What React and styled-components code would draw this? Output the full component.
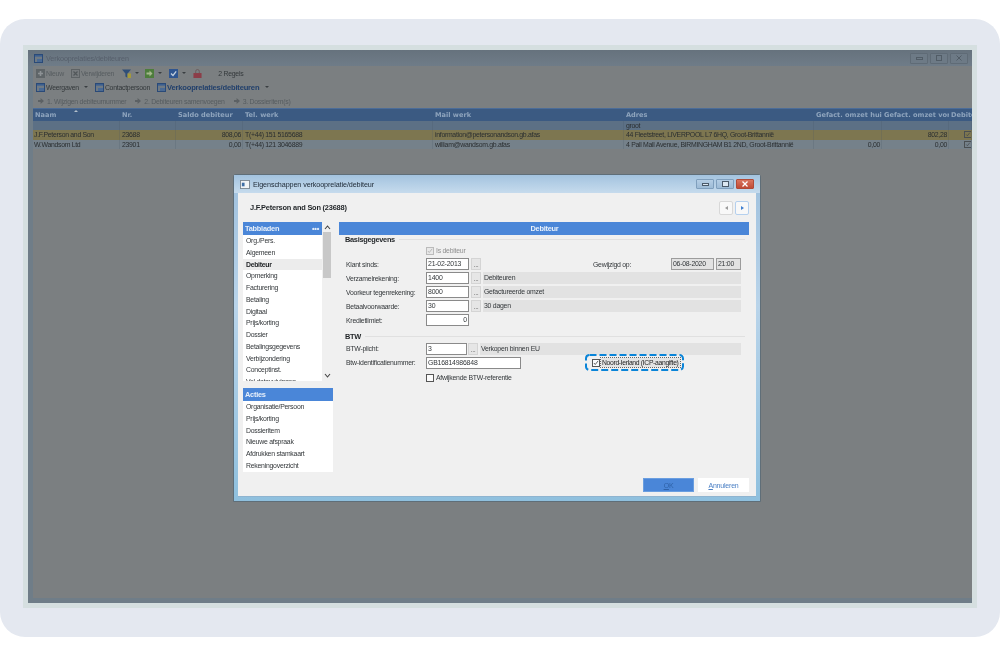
import React from 'react';
import styled, { createGlobalStyle } from 'styled-components';

const GlobalStyle = createGlobalStyle`
  html, body { margin: 0; padding: 0; background: #fff; }
  body { font-family: "Liberation Sans", Arial, sans-serif; }
`;

const Card = styled.div`
  position: relative;
  box-sizing: border-box;
  width: 1000px;
  height: 618px;
  margin-top: 19px;
  padding: 26px 23px 29px;
  background: #e4e8f0;
  border-radius: 25px;
`;

const Frame = styled.div`
  box-sizing: border-box;
  height: 563px;
  padding: 5px;
  background: #d5dfe0;
`;

const AppWindow = styled.div`
  display: flex;
  flex-direction: column;
  height: 100%;
  background: #6f7d88;
  overflow: hidden;
  filter: blur(0.35px);
`;

const AppTitle = styled.div`
  display: flex;
  align-items: center;
  height: 16px;
  flex: none;
  padding: 0 4px 0 6px;
  gap: 3px;
  background: linear-gradient(#66727d, #6f7c88);
  font-size: 7.2px;
  letter-spacing: -0.1px;
  color: #565f6b;
`;

const WinButtons = styled.div`
  display: flex;
  gap: 2px;
  margin-left: auto;
`;

const WinButton = styled.div`
  display: flex;
  align-items: center;
  justify-content: center;
  width: 18px;
  height: 11px;
  border: 1px solid #5f6b76;
  box-sizing: border-box;
  border-radius: 1px;
  color: #515c66;
  background: #6d7a86;
`;

const AppBody = styled.div`
  flex: 1;
  margin: 0 0 5px 5px;
  background: #7b7f81;
  min-height: 0;
`;

const ToolRow = styled.div`
  display: flex;
  align-items: center;
  height: 14px;
  padding-left: ${p => p.$pad ?? 3}px;
  font-size: 6.9px;
  letter-spacing: -0.25px;
  color: #33383b;
`;

const ToolItem = styled.span`
  display: inline-flex;
  align-items: center;
  gap: ${p => p.$iconGap ?? 1}px;
  margin-right: ${p => p.$gap ?? 0}px;
  color: ${p => p.$muted ? '#565c60' : p.$accent ? '#22406c' : '#33383b'};
  font-weight: ${p => p.$accent ? 700 : 400};
  font-size: ${p => p.$accent ? 7.6 : 6.9}px;
  letter-spacing: ${p => p.$accent ? -0.2 : -0.25}px;
  white-space: nowrap;
`;

const Caret = styled.i`
  display: inline-block;
  margin-left: ${p => p.$left ?? 3}px;
  border-left: 2px solid transparent;
  border-right: 2px solid transparent;
  border-top: 2px solid #3a3f42;
`;

const COLS = '87px 56px 67px 190px 191px 190px 68px 67px 23px';

const TableHead = styled.div`
  display: grid;
  grid-template-columns: ${COLS};
  height: 13px;
  background: #3b5a82;
  border-top: 1px solid #4b6c98;
  box-sizing: border-box;
  overflow: hidden;
`;

const HeadCell = styled.div`
  position: relative;
  padding: 0 0 0 2px;
  font-family: "DejaVu Sans", sans-serif;
  font-weight: 700;
  font-size: 6.6px;
  line-height: 12px;
  color: #8ea4bd;
  white-space: nowrap;
  overflow: hidden;
  ${p => p.$sorted && `
    &::after {
      content: '';
      position: absolute;
      left: 41px;
      top: 1px;
      border-left: 2px solid transparent;
      border-right: 2px solid transparent;
      border-bottom: 2px solid #b4c0cc;
    }
  `}
`;

const TableRow = styled.div`
  display: grid;
  grid-template-columns: ${COLS};
  height: ${p => p.$h}px;
  background: ${p => p.$bg};
  overflow: hidden;
`;

const Cell = styled.div`
  box-sizing: border-box;
  padding: 0 1px 0 2px;
  border-right: 1px solid rgba(70, 85, 100, 0.2);
  font-size: 6.9px;
  letter-spacing: -0.3px;
  line-height: ${p => p.$lh}px;
  color: #2a2e30;
  text-align: ${p => p.$right ? 'right' : 'left'};
  white-space: nowrap;
  overflow: hidden;
  &:first-child { padding-left: 1px; }
`;

const GridCheck = styled.span`
  float: right;
  margin: 1px -2px 0 0;
  width: 8px;
  height: 7px;
  box-sizing: border-box;
  border: 1px solid #4a4f52;
  color: #3a3f42;
  display: flex;
`;

const Dialog = styled.div`
  position: absolute;
  left: 233px;
  top: 155px;
  width: 528px;
  height: 328px;
  box-sizing: border-box;
  padding: 0 4px 4px;
  background: linear-gradient(#9fc0dd, #b9d4ea 40%, #8fc0de);
  border: 1px solid #5f6e78;
  border-radius: 3px 3px 0 0;
  display: flex;
  flex-direction: column;
  filter: blur(0.35px);
`;

const DialogTitle = styled.div`
  display: flex;
  align-items: center;
  height: 18px;
  flex: none;
  gap: 3px;
  font-size: 7.2px;
  letter-spacing: -0.1px;
  color: #1c2733;
  background: linear-gradient(#a3c3df, #c6dbed);
  margin: 0 -4px;
  padding: 0 6px 0 6px;
`;

const DialogWinButtons = styled.div`
  display: flex;
  gap: 2px;
  margin-left: auto;
`;

const DialogWinButton = styled.div`
  display: flex;
  align-items: center;
  justify-content: center;
  width: 18px;
  height: 10px;
  box-sizing: border-box;
  border: 1px solid ${p => p.$close ? '#b04a38' : '#7f9fbd'};
  background: ${p => p.$close ? 'linear-gradient(#d9745f, #c04b36)' : 'linear-gradient(#b5cee5, #9dbbd6)'};
  border-radius: 1px;
  color: ${p => p.$close ? '#fff' : '#4a5a6a'};
`;

const DialogBody = styled.div`
  position: relative;
  flex: 1;
  background: #f0f0f0;
  border-bottom: 1px solid #8fb4d0;
  min-height: 0;
  padding: 0 7px 0 5px;
`;

const DialogHead = styled.div`
  display: flex;
  align-items: center;
  justify-content: space-between;
  height: 29px;
  padding: 0 0 0 7px;
  font-size: 7.4px;
  font-weight: 700;
  color: #1f2326;
  letter-spacing: -0.2px;
`;

const NavGroup = styled.div`
  display: flex;
  gap: 2px;
`;

const NavButton = styled.div`
  display: flex;
  align-items: center;
  justify-content: center;
  width: 14px;
  height: 14px;
  box-sizing: border-box;
  background: #f8f8f8;
  border: 1px solid ${p => p.$active ? '#b5d0ee' : '#d8d8d8'};
  border-radius: 2px;
  &::after {
    content: '';
    border-top: 2.5px solid transparent;
    border-bottom: 2.5px solid transparent;
    border-left: ${p => p.$dir === 'next' ? '3px solid #3f7fd0' : 'none'};
    border-right: ${p => p.$dir === 'prev' ? '3px solid #9a9a9a' : 'none'};
  }
`;

const Columns = styled.div`
  display: flex;
  align-items: flex-start;
`;

const Side = styled.div`
  flex: none;
  width: 90px;
  margin-right: 6px;
`;

const TabsWrap = styled.div`
  display: flex;
  height: 159px;
  margin-bottom: 7px;
`;

const TabsList = styled.div`
  width: 79px;
  flex: none;
  overflow: hidden;
`;

const BlueHead = styled.div`
  display: flex;
  align-items: center;
  justify-content: space-between;
  height: 13px;
  padding: 0 3px 0 2px;
  background: #4a86d8;
  color: #e6effa;
  font-size: 7.4px;
  letter-spacing: -0.25px;
  font-weight: 700;
  box-sizing: border-box;
`;

const WhiteList = styled.div`
  background: #fff;
  overflow: hidden;
  padding: 0;
  height: ${p => p.$h}px;
`;

const NavItem = styled.div`
  height: 11.75px;
  line-height: 11.75px;
  padding-left: 3px;
  font-size: 6.9px;
  letter-spacing: ${p => p.$active ? -0.3 : -0.25}px;
  color: ${p => p.$active ? '#1d2023' : '#33373a'};
  font-weight: ${p => p.$active ? 700 : 400};
  background: ${p => p.$active ? '#ececec' : 'transparent'};
  white-space: nowrap;
`;

const ScrollTrack = styled.div`
  width: 11px;
  margin-left: 1px;
  display: flex;
  flex-direction: column;
  align-items: center;
  justify-content: space-between;
  position: relative;
`;

const ScrollThumb = styled.div`
  position: absolute;
  top: 10px;
  left: 0;
  width: 8px;
  height: 46px;
  background: #c8c8c8;
`;

const Chevron = styled.svg`
  width: 7px;
  height: 5px;
  margin: 3px 0;
  position: relative;
  left: -1px;
`;

const Main = styled.div`
  flex: 1;
  min-width: 0;
  padding-right: 0;
`;

const MainHead = styled(BlueHead)`
  justify-content: center;
  padding: 0 0 0 1px;
`;

const Section = styled.div`
  display: flex;
  align-items: center;
  gap: 4px;
  height: 9px;
  margin: ${p => p.$top ?? 0}px 4px 0 6px;
  font-size: 7.4px;
  letter-spacing: -0.3px;
  font-weight: 700;
  color: #1f2326;
  &::after {
    content: '';
    flex: 1;
    height: 1px;
    background: #e0e0e0;
  }
`;

const FormRow = styled.div`
  display: flex;
  align-items: center;
  height: ${p => p.$h ?? 14.1}px;
  margin-top: ${p => p.$top ?? 0}px;
  padding-left: 7px;
  margin-right: 8px;
  font-size: 6.9px;
  letter-spacing: -0.25px;
  color: #33373a;
`;

const Label = styled.span`
  width: 80px;
  flex: none;
  white-space: nowrap;
`;

const Hint = styled.span`
  color: #8f8f8f;
  white-space: nowrap;
`;

const ModifiedLabel = styled.span`
  margin-left: 112px;
  white-space: nowrap;
`;

const Input = styled.div`
  width: ${p => p.$w}px;
  height: 12px;
  box-sizing: border-box;
  flex: none;
  border: 1px solid #8a8a8a;
  background: #fff;
  padding: 0 1px;
  font-size: 6.9px;
  letter-spacing: -0.2px;
  line-height: 10px;
  color: #33373a;
  text-align: ${p => p.$right ? 'right' : 'left'};
  overflow: hidden;
`;

const Dots = styled.div`
  width: 10px;
  height: 12px;
  margin-left: ${p => p.$left ?? 2}px;
  box-sizing: border-box;
  flex: none;
  border: 1px solid #d4d4d4;
  background: #e6e6e6;
  color: #666;
  font-size: 7px;
  line-height: 11px;
  text-align: center;
`;

const Band = styled.div`
  flex: 1;
  height: 12px;
  margin-left: 2px;
  background: #e2e2e2;
  padding-left: 1px;
  line-height: 11px;
  white-space: nowrap;
`;

const Check = styled.span`
  display: inline-flex;
  width: 8px;
  height: 8px;
  box-sizing: border-box;
  flex: none;
  border: 1px solid ${p => p.$muted ? '#bbb' : '#555'};
  background: ${p => p.$muted ? '#e8e8e8' : '#fbfbfb'};
  color: ${p => p.$muted ? '#aaa' : '#333'};
  margin-right: 2px;
`;

const Stamp = styled.div`
  width: ${p => p.$w}px;
  height: 12px;
  flex: none;
  box-sizing: border-box;
  margin-left: ${p => p.$auto ? 'auto' : '2px'};
  border: 1px solid #9c9c9c;
  background: #e2e2e2;
  padding-left: 1px;
  line-height: 10px;
`;

const Callout = styled.div`
  position: absolute;
  left: 347px;
  top: 161px;
  display: flex;
  align-items: center;
  width: 99px;
  height: 17px;
  box-sizing: border-box;
  padding-left: 7px;
  font-size: 6.8px;
  letter-spacing: -0.33px;
  color: #222;
`;

const CalloutDash = styled.svg`
  position: absolute;
  inset: 0;
  width: 99px;
  height: 17px;
  overflow: visible;
`;

const CalloutText = styled.span`
  margin-left: -1px;
  outline: 1px dotted #666;
  padding: 0 1px;
  line-height: 9px;
  white-space: nowrap;
  background: #e4e4e4;
`;

const Footer = styled.div`
  position: absolute;
  right: 7px;
  bottom: 4px;
  display: flex;
  gap: 4px;
`;

const FootButton = styled.div`
  width: 51px;
  height: 14px;
  box-sizing: border-box;
  background: ${p => p.$primary ? '#4a86d8' : '#fff'};
  color: ${p => p.$primary ? '#2f62a8' : '#4a7fc4'};
  border: 1px solid ${p => p.$primary ? '#6a9ee0' : '#fff'};
  font-size: 7px;
  letter-spacing: -0.2px;
  line-height: 13px;
  text-align: center;
  u { text-decoration: underline; }
`;

const Ico = styled.svg`
  width: ${p => p.$s || 9}px;
  height: ${p => p.$s || 9}px;
  flex: none;
  display: block;
`;

const BoxIcon = ({ type }) => {
  if (type === 'plus') return (
    <Ico viewBox="0 0 9 9"><rect width="9" height="9" fill="#5f6568" /><path d="M4.5 2v5M2 4.5h5" stroke="#8d9295" strokeWidth="1.6" /></Ico>
  );
  if (type === 'x') return (
    <Ico viewBox="0 0 9 9"><rect x=".5" y=".5" width="8" height="8" fill="#777b7e" stroke="#5d6265" /><path d="M2.5 2.5l4 4M6.5 2.5l-4 4" stroke="#52575a" strokeWidth="1.2" /></Ico>
  );
  if (type === 'funnel') return (
    <Ico viewBox="0 0 9 9"><path d="M0 .5h9L5.6 4.5V9L3.4 7.6V4.5z" fill="#2f4e78" /><rect x="5.5" y="4.5" width="3.5" height="4.5" fill="#a59a3c" /></Ico>
  );
  if (type === 'green') return (
    <Ico viewBox="0 0 9 9"><rect width="9" height="9" fill="#4d7d3c" /><path d="M1.5 3.5h3V1.5l3 3-3 3v-2h-3z" fill="#a5b88d" /></Ico>
  );
  if (type === 'check') return (
    <Ico viewBox="0 0 9 9"><rect width="9" height="9" fill="#2f5590" /><path d="M2 4.5l2 2 3.2-4.2" fill="none" stroke="#c3cfdc" strokeWidth="1.3" /></Ico>
  );
  if (type === 'lock') return (
    <Ico viewBox="0 0 9 10"><path d="M2.5 4.5V2.6a2 2 0 0 1 4 0v1.9" fill="none" stroke="#6c5a5c" strokeWidth="1.1" /><rect y="4.5" width="9" height="5.5" fill="#8c3d48" /></Ico>
  );
  if (type === 'view') return (
    <Ico viewBox="0 0 9 9"><rect x=".5" y=".5" width="8" height="8" fill="#6f7a84" stroke="#2a4a78" /><rect x="1" y="1" width="7" height="1.6" fill="#3b5f90" /><rect x="3" y="5" width="5" height="3" fill="#4a6a94" /></Ico>
  );
  if (type === 'arrow') return (
    <Ico viewBox="0 0 7 7" $s={6}><path d="M0 2.3h3V0l4 3.5L3 7V4.7H0z" fill="#5c6164" /></Ico>
  );
  return null;
};

const Tick = () => (
  <svg viewBox="0 0 8 8" width="100%" height="100%"><path d="M1.2 4l1.8 2L6.8 1.2" fill="none" stroke="currentColor" strokeWidth="1" /></svg>
);

const columns = ['Naam', 'Nr.', 'Saldo debiteur', 'Tel. werk', 'Mail werk', 'Adres', 'Gefact. omzet huidi', 'Gefact. omzet vorig', 'Debiteur'];

const tabs = ['Org./Pers.', 'Algemeen', 'Debiteur', 'Opmerking', 'Facturering', 'Betaling', 'Digitaal', 'Prijs/korting', 'Dossier', 'Betalingsgegevens', 'Verbijzondering', 'Conceptinst.', 'Vel datavuivingen'];
const actions = ['Organisatie/Persoon', 'Prijs/korting', 'Dossieritem', 'Nieuwe afspraak', 'Afdrukken stamkaart', 'Rekeningoverzicht'];

export default function App() {
  return (
    <>
      <GlobalStyle />
      <Card>
        <Frame>
          <AppWindow>
            <AppTitle>
              <BoxIcon type="view" />
              Verkooprelaties/debiteuren
              <WinButtons>
                <WinButton><svg width="7" height="3"><rect x=".5" y=".5" width="6" height="2" fill="none" stroke="currentColor" /></svg></WinButton>
                <WinButton><svg width="6" height="6"><rect x=".5" y=".5" width="5" height="5" fill="none" stroke="currentColor" /></svg></WinButton>
                <WinButton><svg width="6" height="6"><path d="M.5.5l5 5M5.5.5l-5 5" stroke="currentColor" /></svg></WinButton>
              </WinButtons>
            </AppTitle>
            <AppBody>
              <ToolRow>
                <ToolItem $muted $gap={7}><BoxIcon type="plus" />Nieuw</ToolItem>
                <ToolItem $muted $gap={8}><BoxIcon type="x" />Verwijderen</ToolItem>
                <ToolItem $gap={6}><BoxIcon type="funnel" /><Caret /></ToolItem>
                <ToolItem $gap={7}><BoxIcon type="green" /><Caret /></ToolItem>
                <ToolItem $gap={7}><BoxIcon type="check" /><Caret /></ToolItem>
                <ToolItem $gap={16}><BoxIcon type="lock" /></ToolItem>
                <ToolItem>2 Regels</ToolItem>
              </ToolRow>
              <ToolRow>
                <ToolItem $gap={7}><BoxIcon type="view" />Weergaven<Caret $left={4} /></ToolItem>
                <ToolItem $gap={7}><BoxIcon type="view" />Contactpersoon</ToolItem>
                <ToolItem $accent><BoxIcon type="view" />Verkooprelaties/debiteuren<Caret $left={5} /></ToolItem>
              </ToolRow>
              <ToolRow $pad={5}>
                <ToolItem $muted $iconGap={3} $gap={9}><BoxIcon type="arrow" />1. Wijzigen debiteurnummer</ToolItem>
                <ToolItem $muted $iconGap={3} $gap={9}><BoxIcon type="arrow" />2. Debiteuren samenvoegen</ToolItem>
                <ToolItem $muted $iconGap={3}><BoxIcon type="arrow" />3. Dossieritem(s)</ToolItem>
              </ToolRow>
              <TableHead>
                {columns.map((c, i) => <HeadCell key={c} $sorted={i === 0}>{c}</HeadCell>)}
              </TableHead>
              <TableRow $h={9} $bg="#5c7085">
                {columns.map((c, i) => <Cell key={c} $lh={9}>{i === 5 ? 'groot' : ''}</Cell>)}
              </TableRow>
              <TableRow $h={10} $bg="#7d7650">
                <Cell $lh={10}>J.F.Peterson and Son</Cell>
                <Cell $lh={10}>23688</Cell>
                <Cell $lh={10} $right>808,06</Cell>
                <Cell $lh={10}>T(+44) 151 5165688</Cell>
                <Cell $lh={10}>information@petersonandson.gb.afas</Cell>
                <Cell $lh={10}>44 Fleetstreet, LIVERPOOL L7 6HQ, Groot-Brittannië</Cell>
                <Cell $lh={10} />
                <Cell $lh={10} $right>802,28</Cell>
                <Cell $lh={10}><GridCheck><Tick /></GridCheck></Cell>
              </TableRow>
              <TableRow $h={9} $bg="#75818a">
                <Cell $lh={9}>W.Wandsom Ltd</Cell>
                <Cell $lh={9}>23901</Cell>
                <Cell $lh={9} $right>0,00</Cell>
                <Cell $lh={9}>T(+44) 121 3046889</Cell>
                <Cell $lh={9}>william@wandsom.gb.afas</Cell>
                <Cell $lh={9}>4 Pall Mall Avenue, BIRMINGHAM B1 2ND, Groot-Brittannië</Cell>
                <Cell $lh={9} $right>0,00</Cell>
                <Cell $lh={9} $right>0,00</Cell>
                <Cell $lh={9}><GridCheck><Tick /></GridCheck></Cell>
              </TableRow>
            </AppBody>
          </AppWindow>
        </Frame>

        <Dialog>
          <DialogTitle>
            <svg width="10" height="9" viewBox="0 0 11 10"><rect x=".5" y=".5" width="10" height="9" fill="#f2f4f6" stroke="#7a8590" /><rect x="2" y="3" width="3" height="4" fill="#3f6ea5" /></svg>
            Eigenschappen verkooprelatie/debiteur
            <DialogWinButtons>
              <DialogWinButton><svg width="7" height="3"><rect x=".5" y=".5" width="6" height="2" fill="#dce8f2" stroke="currentColor" /></svg></DialogWinButton>
              <DialogWinButton><svg width="7" height="6"><rect x=".5" y=".5" width="6" height="5" fill="#dce8f2" stroke="currentColor" /></svg></DialogWinButton>
              <DialogWinButton $close><svg width="6" height="6"><path d="M.5.5l5 5M5.5.5l-5 5" stroke="currentColor" strokeWidth="1.3" /></svg></DialogWinButton>
            </DialogWinButtons>
          </DialogTitle>
          <DialogBody>
            <DialogHead>
              J.F.Peterson and Son (23688)
              <NavGroup>
                <NavButton $dir="prev" />
                <NavButton $dir="next" $active />
              </NavGroup>
            </DialogHead>
            <Columns>
              <Side>
                <TabsWrap>
                  <TabsList>
                    <BlueHead>Tabbladen<span>•••</span></BlueHead>
                    <WhiteList $h={146}>
                      {tabs.map(t => <NavItem key={t} $active={t === 'Debiteur'}>{t}</NavItem>)}
                    </WhiteList>
                  </TabsList>
                  <ScrollTrack>
                    <Chevron viewBox="0 0 7 5"><path d="M1 4l2.5-3L6 4" fill="none" stroke="#444" strokeWidth="1.1" /></Chevron>
                    <ScrollThumb />
                    <Chevron viewBox="0 0 7 5"><path d="M1 1l2.5 3L6 1" fill="none" stroke="#444" strokeWidth="1.1" /></Chevron>
                  </ScrollTrack>
                </TabsWrap>
                <BlueHead>Acties</BlueHead>
                <WhiteList $h={71}>
                  {actions.map(t => <NavItem key={t}>{t}</NavItem>)}
                </WhiteList>
              </Side>
              <Main>
                <MainHead>Debiteur</MainHead>
                <Section>Basisgegevens</Section>
                <FormRow $h={13}>
                  <Label />
                  <Check $muted><Tick /></Check>
                  <Hint>Is debiteur</Hint>
                </FormRow>
                <FormRow>
                  <Label>Klant sinds:</Label>
                  <Input $w={43}>21-02-2013</Input>
                  <Dots>...</Dots>
                  <ModifiedLabel>Gewijzigd op:</ModifiedLabel>
                  <Stamp $w={43} $auto>06-08-2020</Stamp>
                  <Stamp $w={25}>21:00</Stamp>
                </FormRow>
                <FormRow>
                  <Label>Verzamelrekening:</Label>
                  <Input $w={43}>1400</Input>
                  <Dots>...</Dots>
                  <Band>Debiteuren</Band>
                </FormRow>
                <FormRow>
                  <Label>Voorkeur tegenrekening:</Label>
                  <Input $w={43}>8000</Input>
                  <Dots>...</Dots>
                  <Band>Gefactureerde omzet</Band>
                </FormRow>
                <FormRow>
                  <Label>Betaalvoorwaarde:</Label>
                  <Input $w={43}>30</Input>
                  <Dots>...</Dots>
                  <Band>30 dagen</Band>
                </FormRow>
                <FormRow>
                  <Label>Kredietlimiet:</Label>
                  <Input $w={43} $right>0</Input>
                </FormRow>
                <Section $top={5}>BTW</Section>
                <FormRow>
                  <Label>BTW-plicht:</Label>
                  <Input $w={41}>3</Input>
                  <Dots $left={1}>...</Dots>
                  <Band>Verkopen binnen EU</Band>
                </FormRow>
                <FormRow>
                  <Label>Btw-identificatienummer:</Label>
                  <Input $w={95}>GB16814986848</Input>
                </FormRow>
                <FormRow $top={1}>
                  <Label />
                  <Check />
                  Afwijkende BTW-referentie
                </FormRow>
              </Main>
            </Columns>
            <Callout>
              <CalloutDash viewBox="0 0 99 17">
                <rect x="1" y="1" width="97" height="15" rx="3.5" fill="none" stroke="#0a84d8" strokeWidth="2" strokeDasharray="7 3" />
              </CalloutDash>
              <Check><Tick /></Check>
              <CalloutText>Noord-Ierland (ICP-aangifte)</CalloutText>
            </Callout>
            <Footer>
              <FootButton $primary><u>O</u>K</FootButton>
              <FootButton><u>A</u>nnuleren</FootButton>
            </Footer>
          </DialogBody>
        </Dialog>
      </Card>
    </>
  );
}
